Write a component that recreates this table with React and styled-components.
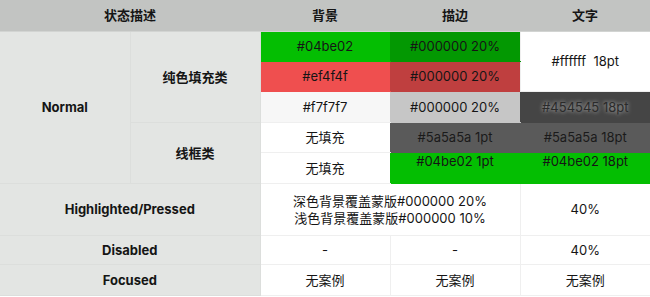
import React from 'react';
import styled, { createGlobalStyle } from 'styled-components';

const GlobalStyle = createGlobalStyle`
  html, body {
    margin: 0;
    padding: 0;
    background: #ffffff;
  }
  body {
    font-family: Inter, "Noto Sans CJK SC", sans-serif;
    color: #151515;
  }
`;

const Table = styled.table`
  width: 650px;
  border-collapse: collapse;
  table-layout: fixed;
  font-size: 13px;
  line-height: 17px;
`;

const HeadCell = styled.th`
  height: 31px;
  padding: 0;
  background: #c2c4c2;
  font-weight: 700;
  font-size: 13px;
  color: #151515;
  text-align: center;
  border-bottom: 1px solid #d2d4d2;
`;

const Label = styled.td`
  padding: 0;
  background: #e3e5e3;
  font-weight: 700;
  color: #151515;
  text-align: center;
  border: 1px solid #dcdedc;
  border-left: none;
`;

const Cell = styled.td`
  height: ${(p) => p.$h || 29}px;
  padding: 0;
  text-align: center;
  vertical-align: ${(p) => (p.$top ? 'top' : 'middle')};
  background: ${(p) => p.$bg || '#ffffff'};
  color: ${(p) => p.$color || '#151515'};
  text-shadow: ${(p) => (p.$glow ? '0 0 4px rgba(255,255,255,0.7)' : 'none')};
  border: 1px solid ${(p) => p.$line || '#efefef'};
  border-right: none;
  white-space: pre;
`;

const Col = styled.col`
  width: 130px;
`;

export default function App() {
  return (
    <>
      <GlobalStyle />
      <Table>
        <colgroup>
          <Col />
          <Col />
          <Col />
          <Col />
          <Col />
        </colgroup>
        <thead>
          <tr>
            <HeadCell colSpan={2}>状态描述</HeadCell>
            <HeadCell>背景</HeadCell>
            <HeadCell>描边</HeadCell>
            <HeadCell>文字</HeadCell>
          </tr>
        </thead>
        <tbody>
          <tr>
            <Label rowSpan={5}>Normal</Label>
            <Label rowSpan={3}>纯色填充类</Label>
            <Cell $bg="#04be02" $line="#04be02">#04be02</Cell>
            <Cell $bg="#039802" $line="#039802">#000000 20%</Cell>
            <Cell rowSpan={2}>#ffffff  18pt</Cell>
          </tr>
          <tr>
            <Cell $bg="#ef4f4f" $line="#ef4f4f">#ef4f4f</Cell>
            <Cell $bg="#bf3f3f" $line="#bf3f3f">#000000 20%</Cell>
          </tr>
          <tr>
            <Cell $h={30} $bg="#f7f7f7">#f7f7f7</Cell>
            <Cell $h={30} $bg="#c6c6c6" $line="#c6c6c6">#000000 20%</Cell>
            <Cell $h={30} $bg="#454545" $line="#454545" $color="#2a2a2a" $glow>#454545 18pt</Cell>
          </tr>
          <tr>
            <Label rowSpan={2}>线框类</Label>
            <Cell>无填充</Cell>
            <Cell $bg="#5a5a5a" $line="#5a5a5a" $color="#1a1a1a">#5a5a5a 1pt</Cell>
            <Cell $bg="#5a5a5a" $line="#5a5a5a" $color="#1a1a1a">#5a5a5a 18pt</Cell>
          </tr>
          <tr>
            <Cell $h={30}>无填充</Cell>
            <Cell $h={30} $bg="#04be02" $line="#04be02" $top>#04be02 1pt</Cell>
            <Cell $h={30} $bg="#04be02" $line="#04be02" $top>#04be02 18pt</Cell>
          </tr>
          <tr>
            <Label colSpan={2}>Highlighted/Pressed</Label>
            <Cell $h={51} colSpan={2}>
              深色背景覆盖蒙版#000000 20%
              {'\n'}
              浅色背景覆盖蒙版#000000 10%
            </Cell>
            <Cell $h={51}>40%</Cell>
          </tr>
          <tr>
            <Label colSpan={2}>Disabled</Label>
            <Cell $h={28}>-</Cell>
            <Cell $h={28}>-</Cell>
            <Cell $h={28}>40%</Cell>
          </tr>
          <tr>
            <Label colSpan={2}>Focused</Label>
            <Cell $h={30}>无案例</Cell>
            <Cell $h={30}>无案例</Cell>
            <Cell $h={30}>无案例</Cell>
          </tr>
        </tbody>
      </Table>
    </>
  );
}
